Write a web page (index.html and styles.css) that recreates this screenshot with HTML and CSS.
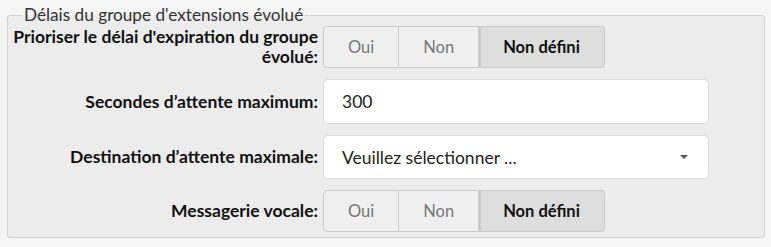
FILE: index.html
```html
<!DOCTYPE html>
<html lang="fr">
<head>
  <meta charset="UTF-8">
  <meta name="viewport" content="width=device-width, initial-scale=1.0">
  <link rel="stylesheet" href="styles.css">
  <title>Délais du groupe d'extensions évolué</title>
</head>
<body>
  <fieldset class="group">
    <legend>Délais du groupe d'extensions évolué</legend>

    <div class="row">
      <label class="label">Prioriser le délai d'expiration du groupe évolué:</label>
      <div class="toggle">
        <button>Oui</button>
        <button>Non</button>
        <button class="active">Non défini</button>
      </div>
    </div>

    <div class="row">
      <label class="label" for="maxWait">Secondes d’attente maximum:</label>
      <input id="maxWait" class="field" type="text" value="300">
    </div>

    <div class="row">
      <label class="label">Destination d’attente maximale:</label>
      <div class="field select">
        <span>Veuillez sélectionner ...</span>
        <span class="caret"></span>
      </div>
    </div>

    <div class="row">
      <label class="label">Messagerie vocale:</label>
      <div class="toggle">
        <button>Oui</button>
        <button>Non</button>
        <button class="active">Non défini</button>
      </div>
    </div>
  </fieldset>
</body>
</html>
```

FILE: styles.css
```css
body {
  margin: 0;
  padding: 4px 6px 0 7px;
  background: #f5f5f5;
  font-family: Lato, "Open Sans", sans-serif;
  font-size: 16px;
  color: #222;
}

.group {
  margin: 0;
  padding: 0 0 5px 0;
  border: 1px solid #d4d4d4;
  border-radius: 3px;
  background: #ececec;
}

.group legend {
  margin-left: 14px;
  padding: 0 2px;
  font-size: 17.2px;
  color: #333;
  line-height: 22px;
}

.row {
  display: grid;
  grid-template-columns: 310px 386px;
  column-gap: 5px;
  align-items: center;
  margin-bottom: 11px;
}

.row:last-child {
  margin-bottom: 0;
}

.label {
  text-align: right;
  font-size: 17.5px;
  font-weight: bold;
  line-height: 20px;
  color: #111;
  padding-left: 4px;
}

.toggle {
  display: flex;
  justify-self: start;
  height: 42px;
}

.toggle button {
  font-family: inherit;
  font-size: 16.5px;
  color: #777;
  background: #efefef;
  border: 1px solid #ccc;
  border-left-width: 0;
  padding: 0 24px;
  cursor: pointer;
}

.toggle button:first-child {
  border-left-width: 1px;
  border-radius: 4px 0 0 4px;
}

.toggle button:last-child {
  border-radius: 0 4px 4px 0;
}

.toggle button.active {
  background: #dedede;
  color: #111;
  font-weight: bold;
  box-shadow: inset 3px 0 3px -2px #bbb;
}

.field {
  box-sizing: border-box;
  height: 45px;
  width: 386px;
  border: 1px solid #ddd;
  border-radius: 4px;
  background: #fff;
  padding: 0 18px;
  font-family: inherit;
  font-size: 17.5px;
  color: #222;
}

.select {
  display: flex;
  align-items: center;
  justify-content: space-between;
  height: 44px;
}

.caret {
  width: 0;
  height: 0;
  border-left: 4px solid transparent;
  border-right: 4px solid transparent;
  border-top: 4px solid #555;
  margin-right: 2px;
}
```
